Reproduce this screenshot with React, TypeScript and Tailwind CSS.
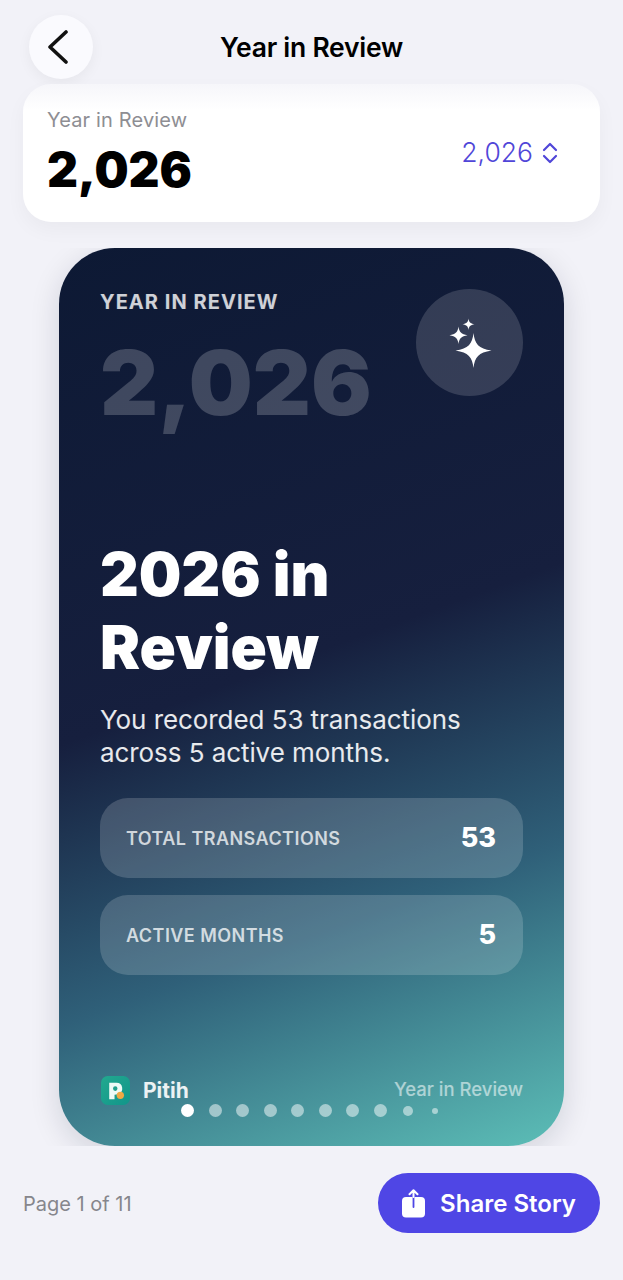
import React from "react";

const font = "font-['Inter','Noto_Sans',sans-serif]";

function PitihLogo() {
  return (
    <svg width="29" height="29" viewBox="0 0 30 30">
      <defs>
        <linearGradient id="logo" x1="0" y1="0" x2="1" y2="1">
          <stop offset="0" stopColor="#22a98f" />
          <stop offset="1" stopColor="#12958a" />
        </linearGradient>
      </defs>
      <rect width="30" height="30" rx="7" fill="url(#logo)" />
      <path d="M8.500 7h7.500a6 6 0 0 1 1.500 11.800l-3.500.7V24H8.500z" fill="#eefaf6" />
      <rect x="12.500" y="10.500" width="4.500" height="5" rx="2.200" fill="#22a08c" />
      <circle cx="20" cy="20" r="3.800" fill="#efa944" />
    </svg>
  );
}

function Sparkles() {
  return (
    <svg width="48" height="52" viewBox="0 0 48 52" fill="#fff">
      <path d="M27.500 16c1.200 11 5 15.500 18 17.500-13 2-16.800 6.500-18 17.500-1.200-11-5-15.500-18-17.500 13-2 16.800-6.500 18-17.500z" />
      <path d="M12.500 9.500c.7 5.500 2.800 7.700 9 8.700-6.200 1-8.300 3.200-9 8.700-.7-5.500-2.800-7.700-9-8.700 6.200-1 8.300-3.200 9-8.700z" />
      <path d="M22.500 1.500c.4 3.600 1.800 5 6 5.700-4.200.7-5.600 2.100-6 5.700-.4-3.600-1.800-5-6-5.700 4.200-.7 5.600-2.100 6-5.700z" />
    </svg>
  );
}

function ShareIcon() {
  return (
    <svg width="23" height="29" viewBox="0 0 23 29" fill="none">
      <rect y="8" width="23" height="20.500" rx="4" fill="#fff" />
      <path d="M11.500 18V2" stroke="#4f46e5" strokeWidth="1.800" strokeLinecap="round" />
      <path d="M11.500 8V2M7.500 5.200l4-3.900 4 3.900" stroke="#fff" strokeWidth="2" strokeLinecap="round" strokeLinejoin="round" />
    </svg>
  );
}

function StatRow({ label, value }: { label: string; value: string }) {
  return (
    <div className="flex h-[80px] items-center justify-between rounded-[28px] bg-white/[.17] pl-[26px] pr-[27px]">
      <span className="text-[18px] font-semibold tracking-[0.45px] text-white/75">{label}</span>
      <span className="text-[27px] font-extrabold text-white">{value}</span>
    </div>
  );
}

const dots = [
  "size-[13px] bg-white",
  "size-[13px] bg-white/50",
  "size-[13px] bg-white/50",
  "size-[13px] bg-white/50",
  "size-[13px] bg-white/50",
  "size-[13px] bg-white/50",
  "size-[13px] bg-white/50",
  "size-[13px] bg-white/50",
  "size-[10px] bg-white/50",
  "size-[6px] bg-white/50",
];

export default function App() {
  return (
    <div className={`${font} flex h-[1280px] w-[623px] flex-col overflow-hidden bg-[#f2f2f8]`}>
      <header className="flex items-center justify-between px-[29px] pt-[15px]">
        <button className="flex size-[64px] items-center justify-center rounded-full bg-[#fafafe] shadow-[0_4px_14px_rgba(0,0,0,0.05)]">
          <svg width="24" height="34" viewBox="0 0 24 34" fill="none" className="mr-[6px]">
            <path d="M20 2 4 17l16 15" stroke="#111" strokeWidth="3.600" strokeLinecap="round" strokeLinejoin="round" />
          </svg>
        </button>
        <h1 className="pt-[1px] text-[26.500px] font-semibold tracking-[-0.25px] text-black">Year in Review</h1>
        <div className="size-[64px]" />
      </header>

      <section className="mx-[23px] mt-[5px] flex h-[138px] items-center justify-between rounded-[28px] bg-[linear-gradient(180deg,#f6f6fa_0,#ffffff_26px)] pl-[24px] pr-[42px] shadow-[0_8px_20px_rgba(0,0,0,0.04)]">
        <div className="flex flex-col pb-[2px]">
          <span className="text-[20px] leading-[26px] tracking-[0.15px] text-[#8e8e93]">Year in Review</span>
          <span className="mt-[9px] text-[48px] font-black leading-[56px] text-black">2,026</span>
        </div>
        <div className="flex items-center gap-[9px] text-[#5046d8]">
          <span className="text-[26.500px] font-light">2,026</span>
          <svg width="16" height="22" viewBox="0 0 16 22" fill="none">
            <path d="M2 8l6-6 6 6M2 14l6 6 6-6" stroke="currentColor" strokeWidth="2.200" strokeLinecap="round" strokeLinejoin="round" />
          </svg>
        </div>
      </section>

      <div className="mt-[26px] flex h-[898px] justify-center overflow-hidden">
        <article className="relative flex h-full w-[505px] flex-col rounded-[56px] bg-[linear-gradient(160deg,#0d1934_0%,#161f3e_46%,#2f6079_72%,#5cbeb7_100%)] px-[41px] shadow-[0_8px_30px_rgba(15,23,42,0.14)]">
          <div className="flex justify-between pt-[41px]">
            <div>
              <p className="text-[20px] font-bold leading-[26px] tracking-[1.05px] text-white/80">YEAR IN REVIEW</p>
              <p className="mt-[18px] text-[90px] font-black leading-[100px] text-white/20">2,026</p>
            </div>
            <div className="flex size-[107px] items-center justify-center rounded-full bg-white/15">
              <Sparkles />
            </div>
          </div>

          <h2 className="mt-[105px] text-[60px] font-black leading-[73px] text-white">
            2026 in
            <br />
            Review
          </h2>
          <p className="mt-[19px] text-[26px] leading-[33px] tracking-[-0.07px] text-white/90">
            You recorded 53 transactions
            <br />
            across 5 active months.
          </p>

          <div className="mt-[29px] flex flex-col gap-[17px]">
            <StatRow label="TOTAL TRANSACTIONS" value="53" />
            <StatRow label="ACTIVE MONTHS" value="5" />
          </div>

          <div className="mt-auto flex items-center justify-between pb-[40px] pl-[1px]">
            <div className="flex items-center gap-[13px]">
              <PitihLogo />
              <span className="text-[21px] font-bold text-white/90">Pitih</span>
            </div>
            <span className="text-[18.500px] font-medium text-white/55">Year in Review</span>
          </div>

          <div className="absolute left-[115px] top-[856px] flex h-[13px] items-center">
            {dots.map((d, i) => (
              <div key={i} className="flex w-[27.500px] justify-center">
                <div className={`${d} rounded-full`} />
              </div>
            ))}
          </div>
        </article>
      </div>

      <footer className="mx-[23px] mt-[27px] flex items-center justify-between">
        <span className="pt-[1px] text-[20px] text-[#86868c]">Page 1 of 11</span>
        <button className="flex h-[60px] w-[222px] items-center justify-center gap-[15px] rounded-full bg-[#4f46e5] text-white">
          <ShareIcon />
          <span className="pt-[2px] text-[24px] font-semibold">Share Story</span>
        </button>
      </footer>
    </div>
  );
}
